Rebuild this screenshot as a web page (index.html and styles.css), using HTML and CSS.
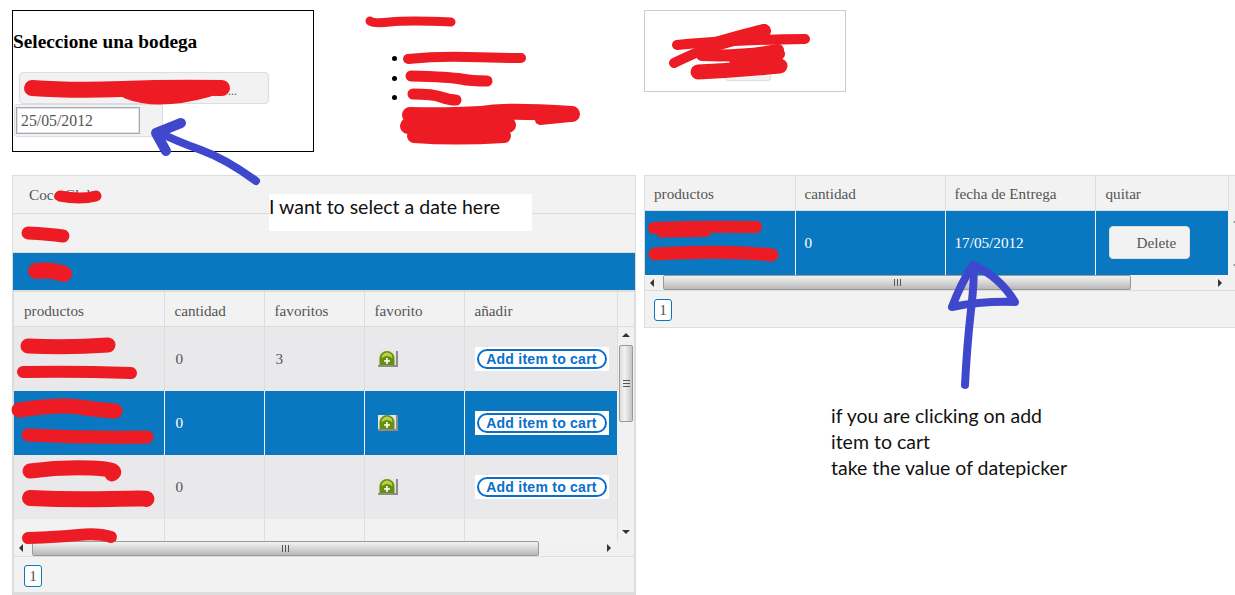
FILE: index.html
```html
<!DOCTYPE html>
<html lang="en">
<head>
  <meta charset="UTF-8">
  <title>Seleccione una bodega</title>
  <link rel="stylesheet" href="styles.css">
</head>
<body>
  <svg class="icon-defs" width="0" height="0">
    <defs>
      <g id="fav">
        <rect x="0" y="1" width="20" height="16" fill="#e6e6e2"/>
        <path d="M18 1h2v16H0v-2h18z" fill="#8b8d86"/>
        <path d="M1.500 15V8.500a7.500 7.500 0 0 1 15 0V15z" fill="#668f10"/>
        <path d="M3.500 8a5.500 5.500 0 0 1 11 0c0 1-2.500-2-5.500-2s-5.500 3-5.500 2z" fill="#b5d24c"/>
        <path d="M8.200 8h1.600v2.200H12v1.600H9.800V14H8.200v-2.200H6v-1.600h2.200z" fill="#fff"/>
      </g>
    </defs>
  </svg>
  <div class="page">
    <div class="top-left">
      <div class="store-box">
        <h3 class="store-title">Seleccione una bodega</h3>
        <div class="store-select">...</div>
        <div class="date-wrap"><input class="date-input" type="text" value="25/05/2012"></div>
      </div>
      <div class="info">
        <ul class="info-list">
          <li></li>
          <li></li>
          <li></li>
        </ul>
      </div>
    </div>
    <div class="top-right">
      <div class="login-box"><div class="login-btn"></div></div>
    </div>

    <!-- left: categories and products -->
    <div class="panel">
      <div class="acc-head acc-first">Coco Club</div>
      <div class="acc-head acc-second"></div>
      <div class="acc-head selected"></div>
      <div class="grid-box">
        <table class="grid grid-products">
          <thead>
            <tr><th class="c1">productos</th><th class="c2">cantidad</th><th class="c3">favoritos</th><th class="c4">favorito</th><th class="c5">añadir</th><th class="c-fill"></th></tr>
          </thead>
        </table>
        <div class="grid-scroll">
          <div class="grid-rows">
            <table class="grid grid-products">
              <tbody>
                <tr class="odd">
                  <td class="c1"></td><td class="c2">0</td><td class="c3">3</td>
                  <td class="c4"><svg class="fav-icon" viewBox="0 0 20 17"><use href="#fav"/></svg></td>
                  <td class="c5"><span class="add-wrap"><span class="add-btn">Add item to cart</span></span></td>
                </tr>
                <tr class="selected">
                  <td class="c1"></td><td class="c2">0</td><td class="c3"></td>
                  <td class="c4"><svg class="fav-icon" viewBox="0 0 20 17"><use href="#fav"/></svg></td>
                  <td class="c5"><span class="add-wrap"><span class="add-btn">Add item to cart</span></span></td>
                </tr>
                <tr class="odd">
                  <td class="c1"></td><td class="c2">0</td><td class="c3"></td>
                  <td class="c4"><svg class="fav-icon" viewBox="0 0 20 17"><use href="#fav"/></svg></td>
                  <td class="c5"><span class="add-wrap"><span class="add-btn">Add item to cart</span></span></td>
                </tr>
                <tr>
                  <td class="c1"></td><td class="c2"></td><td class="c3"></td><td class="c4"></td><td class="c5"></td>
                </tr>
              </tbody>
            </table>
          </div>
          <div class="vscroll">
            <span class="arrow-up"></span>
            <div class="vthumb"><span class="vgrip"></span></div>
            <span class="arrow-down"></span>
          </div>
        </div>
        <div class="hscroll">
          <span class="arrow-left"></span>
          <div class="hthumb thumb-products"><span class="hgrip"></span></div>
          <span class="arrow-right"></span>
        </div>
        <div class="pager"><span class="page-num">1</span></div>
      </div>
    </div>

    <!-- right: cart -->
    <div class="cart-col">
      <div class="cart-panel">
        <table class="grid grid-cart">
          <thead>
            <tr><th class="k1">productos</th><th class="k2">cantidad</th><th class="k3">fecha de Entrega</th><th class="k4">quitar</th></tr>
          </thead>
          <tbody>
            <tr class="selected">
              <td class="k1"></td><td class="k2">0</td><td class="k3">17/05/2012</td>
              <td class="k4"><span class="delete-btn">Delete</span></td>
            </tr>
          </tbody>
        </table>
        <div class="hscroll">
          <span class="arrow-left"></span>
          <div class="hthumb thumb-cart"><span class="hgrip"></span></div>
          <span class="arrow-right"></span>
        </div>
        <div class="pager cart-pager"><span class="page-num">1</span></div>
      </div>
      <p class="note">if you are clicking on add<br>item to cart<br>take the value of datepicker</p>
    </div>

    <div class="note-top">I want to select a date here</div>

    <svg class="ink" width="1235" height="595" viewBox="0 0 1235 595">
      <g class="ink-dark">
        <path d="M1234 222h1M1234 265h1"/>
      </g>
      <g class="ink-red">
        <path stroke-width="9" d="M370 21q3 3 20 1t61 0"/>
        <path stroke-width="10" d="M408 59q30-3 60-2t53 1"/>
        <path stroke-width="11" d="M411 76q40 1 50 3t26 2"/>
        <path stroke-width="11" d="M413 94q20 0 28 3t15 3"/>
        <path stroke-width="16" d="M410 115q60 1 80-2t82 1"/>
        <path stroke-width="10" d="M540 120l30-3"/>
        <path stroke-width="16" d="M408 126q60 3 100-1"/>
        <path stroke-width="14" d="M414 136q40 3 90 0"/>
        <path stroke-width="16" d="M32 88q40 3 90 1t100-1"/>
        <path stroke-width="16" d="M128 91q30 12 80-2"/>
        <path stroke-width="10" d="M677 45q50-5 128-6"/>
        <path stroke-width="10" d="M674 63q36-18 90-34"/>
        <path stroke-width="14" d="M702 48q40-12 62-17"/>
        <path stroke-width="12" d="M702 55q40 2 76-5"/>
        <path stroke-width="12" d="M735 60q20 0 44-6"/>
        <path stroke-width="15" d="M698 72q40-2 82-6"/>
        <path stroke-width="11" d="M60 196q20 4 36 0"/>
        <path stroke-width="13" d="M28 233q20 1 35 3"/>
        <path stroke-width="16" d="M36 271q15-2 28 3"/>
        <path stroke-width="15" d="M28 346q40 2 80-1"/>
        <path stroke-width="12" d="M23 372q50-1 108 1"/>
        <path stroke-width="15" d="M19 410q40-6 60-3t36 4"/>
        <path stroke-width="13" d="M28 435q60 3 119 2"/>
        <path stroke-width="15" d="M30 471q30-4 60-3t22 6"/>
        <path stroke-width="16" d="M30 498q40 2 80 1t36 0"/>
        <path stroke-width="12" d="M28 538q30-1 50-3t33 2"/>
        <path stroke-width="12" d="M654 228q50-2 102-1"/>
        <path stroke-width="5" d="M660 235q30 0 48-1"/>
        <path stroke-width="13" d="M655 254q50-3 88-1t26 2"/>
      </g>
      <g class="ink-blue">
        <path stroke-width="8" d="M256 181q-30-22-55-31t-43-18"/>
        <path stroke-width="10" d="M181 123l-25 10 10 18"/>
        <path stroke-width="8" d="M965 385q2-40 6-75t2-44"/>
        <path stroke-width="8" d="M973 265q-12 18-21 42q30-6 63-5q-16-26-42-37"/>
      </g>
    </svg>
  </div>
</body>
</html>
```

FILE: styles.css
```css
* { box-sizing: border-box; }
body {
  margin: 0;
  background: #fff;
  font-family: "Liberation Serif", "Times New Roman", serif;
  font-size: 15.2px;
  color: #555;
}
.icon-defs {
  display: block;
  height: 0;
}
.page {
  position: relative;
  width: 1235px;
  height: 595px;
  overflow: hidden;
  display: grid;
  grid-template-columns: 624px 600px;
  grid-template-rows: 165px 420px;
  column-gap: 8px;
  padding: 10px 0 0 12px;
}

/* top row */
.top-left {
  display: flex;
  align-items: flex-start;
}
.store-box {
  width: 302px;
  height: 142px;
  border: 1px solid #000;
}
.store-title {
  margin: 22px 0 21px;
  font-size: 19.3px;
  line-height: 18px;
  color: #000;
}
.store-select {
  width: 250px;
  height: 32px;
  margin-left: 6px;
  padding: 11px 0 0 208px;
  background: #f2f2f2;
  border: 1px solid #ddd;
  border-radius: 4px;
  font-size: 12px;
  line-height: 14px;
}
.date-wrap {
  width: 149px;
  height: 33px;
  margin-left: 1px;
  padding: 2px 0 0 1px;
  background: #f2f2f2;
  border: 1px solid #ddd;
  border-radius: 3px;
}
.date-input {
  display: block;
  width: 124px;
  height: 27px;
  padding: 0 0 0 4px;
  border: 1px solid #a3a9b5;
  box-shadow: inset 0 0 0 1px #dfe3ea;
  background: #fff;
  font-family: inherit;
  font-size: 15.8px;
  color: #555;
  outline: none;
}
.info {
  margin-left: 52px;
  width: 220px;
}
.info-list {
  margin: 38px 0 0;
  padding: 0 0 0 43px;
  font-size: 18px;
  line-height: 19.5px;
  color: #000;
}
.info-list li {
  height: 19.5px;
}
.login-box {
  width: 202px;
  height: 82px;
  border: 1px solid #ccc;
  padding: 50px 0 0 80px;
}
.login-btn {
  width: 46px;
  height: 20px;
  background: #f2f2f2;
  border: 1px solid #ddd;
  border-radius: 3px;
}

/* panels */
.panel {
  width: 624px;
  height: 420px;
  border: 1px solid #ddd;
  border-bottom: 0;
  background: #f2f2f2;
}
.acc-head {
  padding: 10px 0 0 16px;
  line-height: 18px;
  border-bottom: 1px solid #ddd;
}
.acc-first { height: 38px; }
.acc-second { height: 39px; }
.acc-head.selected {
  height: 37px;
  background: #0a78c0;
  border-bottom: 0;
}
.grid-box {
  height: 305px;
  border: 1px solid #ddd;
  border-width: 2px 1px 3px;
}
.grid {
  border-collapse: collapse;
  table-layout: fixed;
}
.grid-products { width: 603px; }
.grid th {
  height: 34px;
  padding: 3px 0 0 10px;
  text-align: left;
  font-weight: normal;
  border-right: 1px solid #ddd;
  border-bottom: 1px solid #ddd;
}
.grid-products th { padding-top: 5px; }
.grid td {
  height: 64px;
  padding: 0 0 0 11px;
  border-right: 1px solid #ddd;
}
.c1 { width: 150px; }
.c2, .c3, .c4 { width: 100px; }
.c5 { width: 153px; }
.grid .c-fill { width: 17px; border-right: 0; }
.grid tr.odd { background: #e9e9eb; }
.grid tr.selected { background: #0a78c0; color: #fff; }
.grid tr.selected td { border-right-color: #f2f2f2; }
.fav-icon {
  display: block;
  width: 20px;
  height: 17px;
  margin-left: 2px;
}
.add-wrap {
  display: block;
  width: 134px;
  height: 24px;
  margin-left: -1px;
  padding: 2px;
  background: #fff;
}
.add-btn {
  display: block;
  height: 20px;
  border: 2px solid #0a6fc9;
  border-radius: 10px;
  font-family: "Liberation Sans", Arial, sans-serif;
  font-weight: bold;
  font-size: 14px;
  letter-spacing: .25px;
  line-height: 16px;
  color: #0a6fc9;
  text-align: center;
  white-space: nowrap;
}
.grid-scroll {
  display: flex;
  height: 214px;
}
.grid-rows {
  width: 604px;
  height: 214px;
  overflow: hidden;
}
.vscroll {
  width: 16px;
  display: flex;
  flex-direction: column;
  align-items: center;
  background: #f1f1f1;
}
.vthumb {
  width: 14px;
  height: 77px;
  margin: 8px 0 108px;
  display: flex;
  align-items: center;
  justify-content: center;
  background: linear-gradient(to right, #dcdcdc, #f2f2f2 40%, #c4c4c4);
  border: 1px solid #999;
  border-radius: 2px;
}
.vgrip {
  width: 7px;
  height: 7px;
  background: repeating-linear-gradient(to bottom, #555 0 1px, transparent 1px 3px);
}
.arrow-up, .arrow-down, .arrow-left, .arrow-right {
  flex: none;
  width: 0;
  height: 0;
  border: 4px solid transparent;
}
.arrow-up { border-bottom-color: #333; border-top-width: 0; margin-top: 6px; }
.arrow-down { border-top-color: #333; border-bottom-width: 0; }
.arrow-left { border-right-color: #333; border-left-width: 0; margin-left: 5px; }
.arrow-right { border-left-color: #333; border-right-width: 0; }
.hscroll {
  display: flex;
  align-items: center;
  height: 16px;
  background: #f1f1f1;
  border-bottom: 1px solid #ddd;
}
.hthumb {
  height: 15px;
  margin: 0 68px 0 9px;
  display: flex;
  align-items: center;
  justify-content: center;
  background: linear-gradient(to bottom, #f2f2f2, #d6d6d6 50%, #b8b8b8);
  border: 1px solid #999;
  border-radius: 2px;
}
.thumb-products { width: 507px; }
.thumb-cart { width: 468px; margin-right: 87px; }
.hgrip {
  width: 7px;
  height: 7px;
  background: repeating-linear-gradient(to right, #555 0 1px, transparent 1px 3px);
}
.pager {
  height: 35px;
  padding: 8px 0 0 10px;
}
.page-num {
  display: block;
  width: 18px;
  height: 22px;
  border: 1px solid #0a78c0;
  border-radius: 3px;
  background: #fff;
  line-height: 20px;
  text-align: center;
  color: #555;
}

/* cart */
.cart-panel {
  width: 600px;
  height: 153px;
  border: 1px solid #ddd;
  border-width: 1px 0 1px 1px;
  background: #f2f2f2;
}
.grid-cart { width: 583px; }
.grid-cart th { padding-left: 10px; }
.grid-cart th.k1, .grid-cart th.k2, .grid-cart th.k3 { padding-left: 9px; }
.grid-cart td { height: 65px; padding-left: 9px; }
.grid-cart tr.selected { background: #0a78c0; }
.k1 { width: 150px; }
.k2, .k3 { width: 150px; }
.k4 { width: 133px; }
.grid-cart td.k4 { padding-left: 13px; }
.delete-btn {
  display: block;
  width: 81px;
  height: 33px;
  padding-left: 27px;
  background: #f2f2f2;
  border: 1px solid #ddd;
  border-radius: 4px;
  line-height: 31px;
  color: #555;
}
.cart-pager { padding-left: 9px; }
.note {
  margin: 75px 0 0 187px;
  font-family: Lato, "Open Sans", sans-serif;
  font-size: 19.5px;
  line-height: 26px;
  color: #111;
}

/* things drawn on top of the screenshot */
.note-top {
  position: absolute;
  left: 269px;
  top: 194px;
  width: 263px;
  height: 37px;
  background: #fff;
  font-family: Lato, "Open Sans", sans-serif;
  font-size: 19.5px;
  line-height: 25px;
  color: #111;
}
.ink {
  position: absolute;
  left: 0;
  top: 0;
  pointer-events: none;
}
.ink path { fill: none; stroke-linecap: round; stroke-linejoin: round; }
.ink-dark path { stroke: #444; stroke-width: 1; }
.ink-red path { stroke: #ed1c24; }
.ink-blue path { stroke: #3f48cc; }
```
